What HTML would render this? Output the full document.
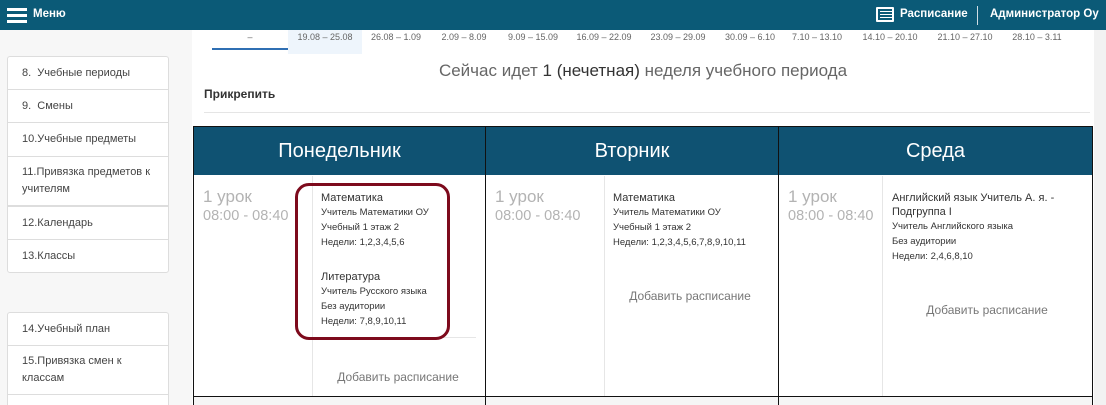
<!DOCTYPE html>
<html><head><meta charset="utf-8"><style>
*{margin:0;padding:0;box-sizing:border-box}
html,body{width:1106px;height:405px;overflow:hidden}
body{background:#f2f2f2;font-family:"Liberation Sans",sans-serif;position:relative;color:#333}
.top{position:absolute;left:0;top:0;width:1106px;height:30px;background:#0b5a77;color:#fff;font-size:11.5px;font-weight:bold}
.side{position:absolute;left:0;top:30px;width:192px;height:375px;background:#f7f7f7}
.box{position:absolute;left:7px;width:162px;background:#fff;border:1px solid #ddd;border-radius:3px}
.it{border-bottom:1px solid #ddd;font-size:11px;color:#444;padding:0 0 0 14px;display:flex;align-items:center;line-height:17px}
.main{position:absolute;left:192px;top:30px;width:902px;height:375px;background:#fff}
.tab{position:absolute;top:0;font-size:9px;color:#666;white-space:nowrap;transform:translateX(-50%)}
.a{position:absolute}
.day{position:absolute;top:126px;height:50px;background:#0f5272;color:#fff;font-size:20px;display:flex;align-items:center;justify-content:center;border:1px solid #111}
.cell{position:absolute;top:175px;height:222px;border:1px solid #111;border-top:none;background:#fff}
.les{position:absolute;font-size:17px;color:#b3b3b3;line-height:21px}
.les small{display:block;font-size:14.5px;line-height:18px}
.e{position:absolute;font-size:11px;color:#333;line-height:14px}
.e div{font-size:9.5px;line-height:15px;color:#333}
.add{position:absolute;font-size:12px;color:#777;transform:translateX(-50%);white-space:nowrap}
.vl{position:absolute;top:176px;width:1px;height:220px;background:#e6e6e6}
</style></head><body>
<div class="top">
 <div class="a" style="left:7px;top:8px;width:20px;height:3px;background:#fff"></div>
 <div class="a" style="left:7px;top:14px;width:20px;height:3px;background:#fff"></div>
 <div class="a" style="left:7px;top:20px;width:20px;height:3px;background:#fff"></div>
 <div class="a" style="left:33px;top:8px">Меню</div>
 <div class="a" style="left:876px;top:7px;width:18px;height:15px;border:2px solid #fff;border-radius:1px"></div>
 <div class="a" style="left:880px;top:11px;width:12px;height:1px;background:#fff;box-shadow:0 3px 0 #fff,0 6px 0 #fff"></div>
 <div class="a" style="left:900px;top:8px">Расписание</div>
 <div class="a" style="left:977px;top:6px;width:1px;height:19px;background:#cfdde4"></div>
 <div class="a" style="left:990px;top:8px">Администратор Оу</div>
</div>
<div class="side">
 <div class="box" style="top:26px">
  <div class="it" style="height:33px">8.&nbsp; Учебные периоды</div>
  <div class="it" style="height:33px">9.&nbsp; Смены</div>
  <div class="it" style="height:34px">10.Учебные предметы</div>
  <div class="it" style="height:50px;border-bottom:2px solid #ddd">11.Привязка предметов к<br>учителям</div>
  <div class="it" style="height:33px">12.Календарь</div>
  <div class="it" style="height:32px;border:none">13.Классы</div>
 </div>
 <div class="box" style="top:282px;height:100px">
  <div class="it" style="height:33px">14.Учебный план</div>
  <div class="it" style="height:49px">15.Привязка смен к<br>классам</div>
 </div>
</div>
<div class="main">
 <div class="a" style="left:20px;top:18px;width:76px;height:2px;background:#2f6fb3"></div>
 <div class="a" style="left:96px;top:0;width:74px;height:24px;background:#eef5fc"></div>
 <div class="tab" style="left:58px;top:2px">–</div>
 <div class="tab" style="left:133px;top:2px">19.08 – 25.08</div>
 <div class="tab" style="left:204px;top:2px">26.08 – 1.09</div>
 <div class="tab" style="left:272px;top:2px">2.09 – 8.09</div>
 <div class="tab" style="left:341px;top:2px">9.09 – 15.09</div>
 <div class="tab" style="left:412px;top:2px">16.09 – 22.09</div>
 <div class="tab" style="left:486px;top:2px">23.09 – 29.09</div>
 <div class="tab" style="left:558px;top:2px">30.09 – 6.10</div>
 <div class="tab" style="left:625px;top:2px">7.10 – 13.10</div>
 <div class="tab" style="left:698px;top:2px">14.10 – 20.10</div>
 <div class="tab" style="left:773px;top:2px">21.10 – 27.10</div>
 <div class="tab" style="left:845px;top:2px">28.10 – 3.11</div>
 <div class="a" style="left:0;width:902px;top:31px;text-align:center;font-size:17px;color:#666">Сейчас идет <span style="color:#333">1 (нечетная)</span> неделя учебного периода</div>
 <div class="a" style="left:12px;top:57px;font-size:12px;font-weight:bold;color:#333">Прикрепить</div>
 <div class="a" style="left:12px;top:82px;width:886px;height:1px;background:#e5e5e5"></div>
</div>
<div class="day" style="left:193px;width:293px">Понедельник</div>
<div class="day" style="left:485px;width:294px">Вторник</div>
<div class="day" style="left:778px;width:315px">Среда</div>
<div class="cell" style="left:193px;width:293px"></div>
<div class="cell" style="left:485px;width:294px"></div>
<div class="cell" style="left:778px;width:315px"></div>
<div class="a" style="left:193px;top:396px;width:900px;height:9px;background:#f5f5f5;border-left:1px solid #111;border-top:1px solid #111"></div>
<div class="a" style="left:485px;top:396px;width:1px;height:9px;background:#111"></div>
<div class="a" style="left:778px;top:396px;width:1px;height:9px;background:#111"></div>
<div class="a" style="left:1092px;top:396px;width:1px;height:9px;background:#111"></div>
<div class="vl" style="left:312px"></div>
<div class="vl" style="left:604px"></div>
<div class="vl" style="left:882px"></div>
<div class="les" style="left:203px;top:186px">1 урок<small>08:00 - 08:40</small></div>
<div class="les" style="left:495px;top:186px">1 урок<small>08:00 - 08:40</small></div>
<div class="les" style="left:788px;top:186px">1 урок<small>08:00 - 08:40</small></div>
<div class="e" style="left:321px;top:191px">Математика<div>Учитель Математики ОУ</div><div>Учебный 1 этаж 2</div><div>Недели: 1,2,3,4,5,6</div></div>
<div class="e" style="left:321px;top:270px">Литература<div>Учитель Русского языка</div><div>Без аудитории</div><div>Недели: 7,8,9,10,11</div></div>
<div class="a" style="left:312px;top:337px;width:164px;height:1px;background:#e6e6e6"></div>
<div class="add" style="left:398px;top:370px">Добавить расписание</div>
<div class="a" style="left:295px;top:183px;width:155px;height:157px;border:3px solid #7d0a1c;border-radius:14px"></div>
<div class="e" style="left:613px;top:191px">Математика<div>Учитель Математики ОУ</div><div>Учебный 1 этаж 2</div><div>Недели: 1,2,3,4,5,6,7,8,9,10,11</div></div>
<div class="add" style="left:690px;top:289px">Добавить расписание</div>
<div class="e" style="left:892px;top:191px;width:190px">Английский язык Учитель А. я. - Подгруппа I<div>Учитель Английского языка</div><div>Без аудитории</div><div>Недели: 2,4,6,8,10</div></div>
<div class="add" style="left:987px;top:303px">Добавить расписание</div>
</body></html>
